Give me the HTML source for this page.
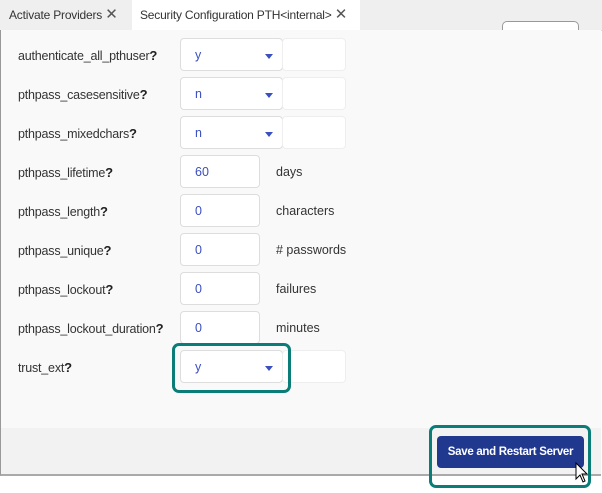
<!DOCTYPE html><html><head><style>
body{margin:0;width:602px;height:493px;background:#fff;font-family:"Liberation Sans",sans-serif;position:relative;overflow:hidden;font-size:12.5px;color:#333}
.tabs{position:absolute;left:0;top:0;width:602px;height:30px;background:#efefef;border-bottom:1px solid #ddd}
.tab{position:absolute;top:0;height:30px;line-height:30px;font-size:12px;color:#333;white-space:nowrap;letter-spacing:-0.2px}
.main{position:absolute;left:0;top:30px;width:600px;height:398px;background:#f9f9f9;border-left:1px solid #999}
.foot{position:absolute;left:0;top:428px;width:600px;height:46px;background:#f2f2f2;border-left:1px solid #999;border-bottom:2px solid #aaa}
.lab{position:absolute;left:18px;font-size:12.5px;letter-spacing:-0.2px}
.lab b{font-size:13px;color:#222}
.sel,.inp,.blank{position:absolute;height:33px;background:#fff;border:1px solid #ddd;border-radius:4px;box-sizing:border-box}
.sel{left:180px;width:103px;color:#3a4fc0;padding:9px 0 0 14px}
.sel:after{content:"";position:absolute;right:9px;top:15px;border-left:4px solid transparent;border-right:4px solid transparent;border-top:5px solid #3a4fc0}
.blank{left:282px;width:64px;border-color:#eee}
.inp{left:180px;width:80px;color:#3a4fc0;padding:9px 0 0 14px}
.unit{position:absolute;left:276px}
.hl{position:absolute;border:3px solid #0a7d78;border-radius:7px;box-sizing:border-box}
.btn{position:absolute;left:437px;top:436px;width:147px;height:32px;background:#21388f;border-radius:4px;color:#fff;font-weight:bold;font-size:11.5px;letter-spacing:-0.3px;text-align:center;line-height:32px;white-space:nowrap}
</style></head><body>
<div class="tabs">
<div class="tab" style="left:9px">Activate Providers <span style="font-size:15px;color:#555">✕</span></div>
<div class="tab" style="left:132px;width:228px;background:#fff;padding-left:8px;box-sizing:border-box">Security Configuration PTH&lt;internal&gt; <span style="font-size:15px;color:#555">✕</span></div>
<div style="position:absolute;left:502px;top:21px;width:75px;height:9px;border:1px solid #999;border-bottom:none;border-radius:5px 5px 0 0;background:#fff"></div>
</div>
<div class="main"></div>
<div class="foot"></div>

<div class="lab" style="top:48px">authenticate_all_pthuser<b>?</b></div>
<div class="sel" style="top:38px">y</div><div class="blank" style="top:38px"></div>
<div class="lab" style="top:87px">pthpass_casesensitive<b>?</b></div>
<div class="sel" style="top:77px">n</div><div class="blank" style="top:77px"></div>
<div class="lab" style="top:126px">pthpass_mixedchars<b>?</b></div>
<div class="sel" style="top:116px">n</div><div class="blank" style="top:116px"></div>
<div class="lab" style="top:165px">pthpass_lifetime<b>?</b></div>
<div class="inp" style="top:155px">60</div><div class="unit" style="top:165px">days</div>
<div class="lab" style="top:204px">pthpass_length<b>?</b></div>
<div class="inp" style="top:194px">0</div><div class="unit" style="top:204px">characters</div>
<div class="lab" style="top:243px">pthpass_unique<b>?</b></div>
<div class="inp" style="top:233px">0</div><div class="unit" style="top:243px"># passwords</div>
<div class="lab" style="top:282px">pthpass_lockout<b>?</b></div>
<div class="inp" style="top:272px">0</div><div class="unit" style="top:282px">failures</div>
<div class="lab" style="top:321px">pthpass_lockout_duration<b>?</b></div>
<div class="inp" style="top:311px">0</div><div class="unit" style="top:321px">minutes</div>
<div class="lab" style="top:360px">trust_ext<b>?</b></div>
<div class="sel" style="top:350px">y</div><div class="blank" style="top:350px"></div>
<div class="hl" style="left:172px;top:343px;width:119px;height:50px"></div>
<div class="btn">Save and Restart Server</div>
<div class="hl" style="left:429px;top:425px;width:162px;height:63px"></div>
<svg style="position:absolute;left:575px;top:462px" width="14" height="22" viewBox="0 0 14 22"><path d="M1 1 L1 17 L5 13 L8 20 L10 19 L7 12 L12 12 Z" fill="#fff" stroke="#000" stroke-width="1"/></svg>
</body></html>
